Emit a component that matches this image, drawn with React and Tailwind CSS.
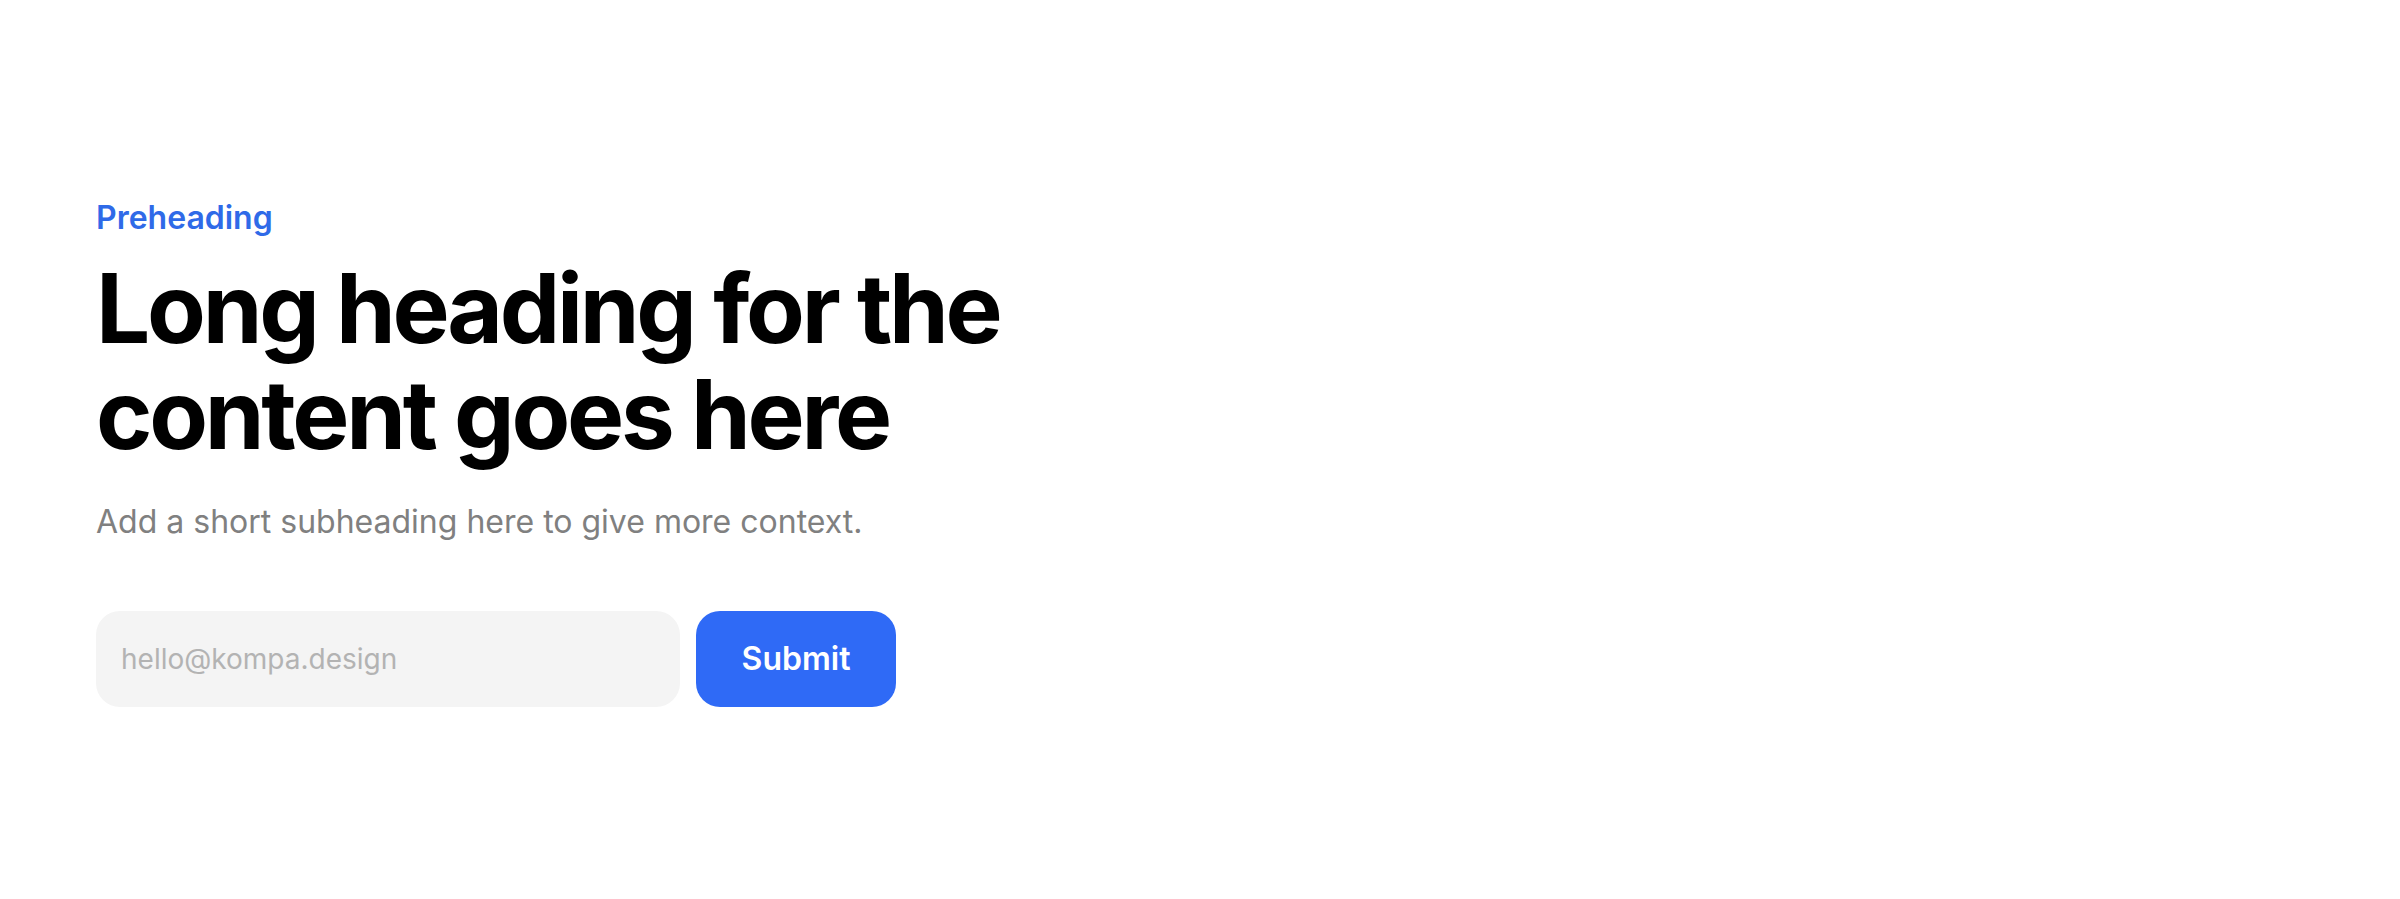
export default function App() {
  return (
    <div
      className="min-h-screen w-full bg-white flex items-center px-[96px]"
      style={{ fontFamily: "Inter, 'Noto Sans', sans-serif" }}
    >
      <div className="flex flex-col pt-[3px]">
        <p className="text-[32px] leading-[45px] font-semibold text-[#2f6ae8] mb-4">Preheading</p>
        <h1 className="text-[96px] leading-[1.1] font-bold text-black tracking-[-0.034em]">
          Long heading for the
          <br />
          content goes here
        </h1>
        <p className="text-[32px] leading-[45px] text-[#808080] mt-8">
          Add a short subheading here to give more context.
        </p>
        <div className="flex gap-4 mt-[67px]">
          <input
            type="text"
            placeholder="hello@kompa.design"
            className="w-[584px] h-[96px] rounded-[24px] bg-[#f4f4f4] px-[25px] text-[28px] placeholder:text-[#b3b3b3] outline-none"
          />
          <button className="w-[200px] h-[96px] rounded-[24px] bg-[#2f6af6] text-white text-[32px] font-semibold">
            Submit
          </button>
        </div>
      </div>
    </div>
  );
}
